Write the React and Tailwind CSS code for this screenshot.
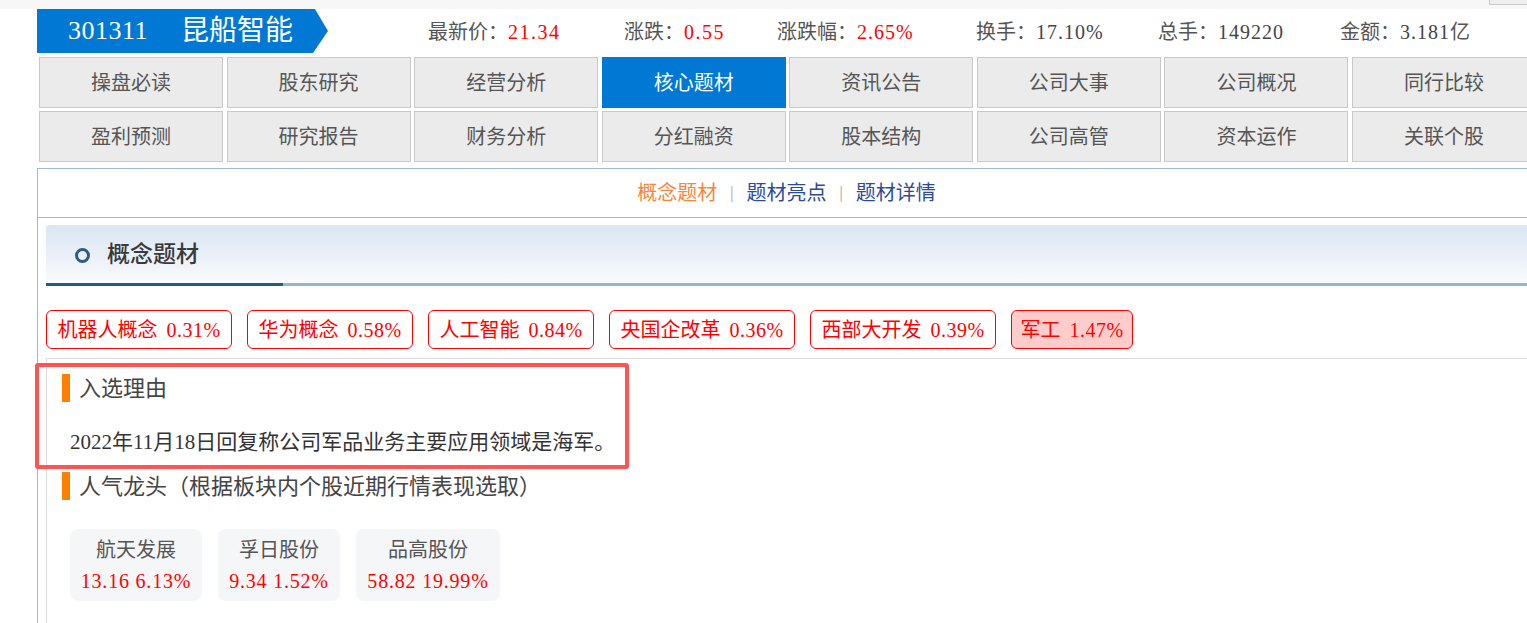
import React from "react";

const tabs1 = ["操盘必读", "股东研究", "经营分析", "核心题材", "资讯公告", "公司大事", "公司概况", "同行比较"];
const tabs2 = ["盈利预测", "研究报告", "财务分析", "分红融资", "股本结构", "公司高管", "资本运作", "关联个股"];

const tags = [
  { n: "机器人概念", v: "0.31%", w: "w-[186px]" },
  { n: "华为概念", v: "0.58%", w: "w-[166px]" },
  { n: "人工智能", v: "0.84%", w: "w-[166px]" },
  { n: "央国企改革", v: "0.36%", w: "w-[186px]" },
  { n: "西部大开发", v: "0.39%", w: "w-[186px]" },
];

const cards = [
  { n: "航天发展", a: "13.16", b: "6.13%", w: "w-[132px]" },
  { n: "孚日股份", a: "9.34", b: "1.52%", w: "w-[122px]" },
  { n: "品高股份", a: "58.82", b: "19.99%", w: "w-[144px]" },
];

function Tab({ label, active }) {
  return (
    <div
      className={
        active
          ? "h-[51px] flex items-center justify-center bg-[#0078d4] text-white text-[20px] border border-[#0078d4]"
          : "h-[51px] flex items-center justify-center bg-[#ebebeb] text-[#555] text-[20px] border border-[#c9c9c9]"
      }
    >
      {label}
    </div>
  );
}

export default function App() {
  return (
    <div
      className="relative w-[1527px] h-[623px] overflow-hidden bg-white"
      style={{ fontFamily: '"Liberation Serif", "Noto Sans CJK SC", serif' }}
    >
      {/* top strip */}
      <div className="relative h-[9px] bg-[#f7f7f7]">
        <div className="absolute right-0 top-0 w-[38px] h-[5px] bg-[#eeeeee] border-l border-b border-[#c8c8c8]" />
      </div>

      {/* header row */}
      <div className="flex items-center h-[44px] pl-[37px]">
        <div
          className="h-[44px] w-[291px] bg-[#0078d4] text-white flex items-center pl-[31px]"
          style={{ clipPath: "polygon(0 0, 278px 0, 291px 22px, 276px 44px, 0 44px)" }}
        >
          <span className="text-[26px] leading-none tracking-[0.5px]">301311</span>
          <span className="text-[28px] leading-none ml-[33px]">昆船智能</span>
        </div>
        <div className="flex items-center ml-[100px] text-[20px] text-[#555] mt-[2px]">
          <div className="w-[196px]">最新价：<span className="text-[#ff0000] tracking-[1.5px]">21.34</span></div>
          <div className="w-[153px]">涨跌：<span className="text-[#ff0000] tracking-[1.5px]">0.55</span></div>
          <div className="w-[199px]">涨跌幅：<span className="text-[#ff0000] tracking-[1px]">2.65%</span></div>
          <div className="w-[182px]">换手：<span className="text-[#444] tracking-[1px]">17.10%</span></div>
          <div className="w-[182px]">总手：<span className="text-[#444] tracking-[1px]">149220</span></div>
          <div className="whitespace-nowrap">金额：<span className="text-[#444] tracking-[1px]">3.181</span>亿</div>
        </div>
      </div>

      {/* tabs */}
      <div className="ml-[39px] mt-[4px] w-[1497px] grid grid-cols-8 gap-x-[3.5px] gap-y-[3px]">
        {tabs1.map((t) => (
          <Tab key={t} label={t} active={t === "核心题材"} />
        ))}
        {tabs2.map((t) => (
          <Tab key={t} label={t} />
        ))}
      </div>

      {/* panel */}
      <div className="ml-[37px] mt-[6px] w-[1498px] h-[500px] border-l border-t border-[#9dbcd3]">
        <div className="h-[49px] border-b border-[#9dbcd3] flex items-center justify-center text-[20px]">
          <span className="text-[#f7863a]">概念题材</span>
          <span className="mx-[13px] text-[#9a9a9a] text-[16px]">|</span>
          <span className="text-[#2b4a9a]">题材亮点</span>
          <span className="mx-[13px] text-[#9a9a9a] text-[16px]">|</span>
          <span className="text-[#2b4a9a]">题材详情</span>
        </div>

        <div className="ml-[8px] mt-[7px] relative h-[61px] bg-gradient-to-b from-[#dae5f1] to-[#fbfcfe] rounded-tl-[4px] flex items-center">
          <div className="ml-[29px] w-[15px] h-[15px] rounded-full border-[3px] border-[#2c5d84]" />
          <span className="ml-[17px] text-[23px] text-[#3a3a3a] font-medium">概念题材</span>
          <div className="absolute left-0 bottom-0 right-0 h-[3px] flex">
            <div className="w-[237px] bg-[#1f5c88]" />
            <div className="flex-1 bg-[#8fb6d2]" />
          </div>
        </div>

        <div className="ml-[8px] mt-[24px] flex gap-[15px] text-[20px] text-[#ff0000]">
          {tags.map((g) => (
            <div
              key={g.n}
              className={`${g.w} h-[39px] flex items-center justify-center border border-[#ff0000] rounded-[6px] whitespace-nowrap`}
            >
              <span>{g.n}</span>
              <span className="ml-[9px] tracking-[0.5px]">{g.v}</span>
            </div>
          ))}
          <div className="w-[122px] h-[39px] flex items-center justify-center border border-[#ff0000] rounded-[6px] bg-[#ffcccc] whitespace-nowrap">
            <span>军工</span>
            <span className="ml-[9px] tracking-[0.5px]">1.47%</span>
          </div>
        </div>

        <div className="ml-[8px] mt-[9px] h-[300px] border-l border-t border-[#dcdcdc]">
          <div className="mt-[15px] ml-[15px] flex items-center h-[28px]">
            <div className="w-[8px] h-[28px] bg-[#ff7f00]" />
            <span className="ml-[9px] text-[22px] text-[#444]">入选理由</span>
          </div>
          <div className="mt-[28px] ml-[23px] text-[21px] text-[#333] leading-[24px] whitespace-nowrap">
            2022年11月18日回复称公司军品业务主要应用领域是海军。
          </div>
          <div className="mt-[18px] ml-[15px] flex items-center h-[28px]">
            <div className="w-[8px] h-[28px] bg-[#ff7f00]" />
            <span className="ml-[9px] text-[22px] text-[#444] whitespace-nowrap">人气龙头（根据板块内个股近期行情表现选取）</span>
          </div>
          <div className="mt-[29px] ml-[23px] flex gap-[16px]">
            {cards.map((c) => (
              <div
                key={c.n}
                className={`${c.w} h-[72px] bg-[#f5f6f8] rounded-[8px] flex flex-col items-center justify-center`}
              >
                <div className="text-[20px] text-[#555] leading-[26px]">{c.n}</div>
                <div className="text-[20px] text-[#ff0000] leading-[26px] mt-[5px] whitespace-nowrap tracking-[0.8px]">
                  {c.a}&nbsp;{c.b}
                </div>
              </div>
            ))}
          </div>
        </div>
      </div>

      {/* annotation box */}
      <div className="absolute left-[35px] top-[363px] w-[594px] h-[106px] border-[4px] border-[#ff5454] rounded-[3px]" />
    </div>
  );
}
